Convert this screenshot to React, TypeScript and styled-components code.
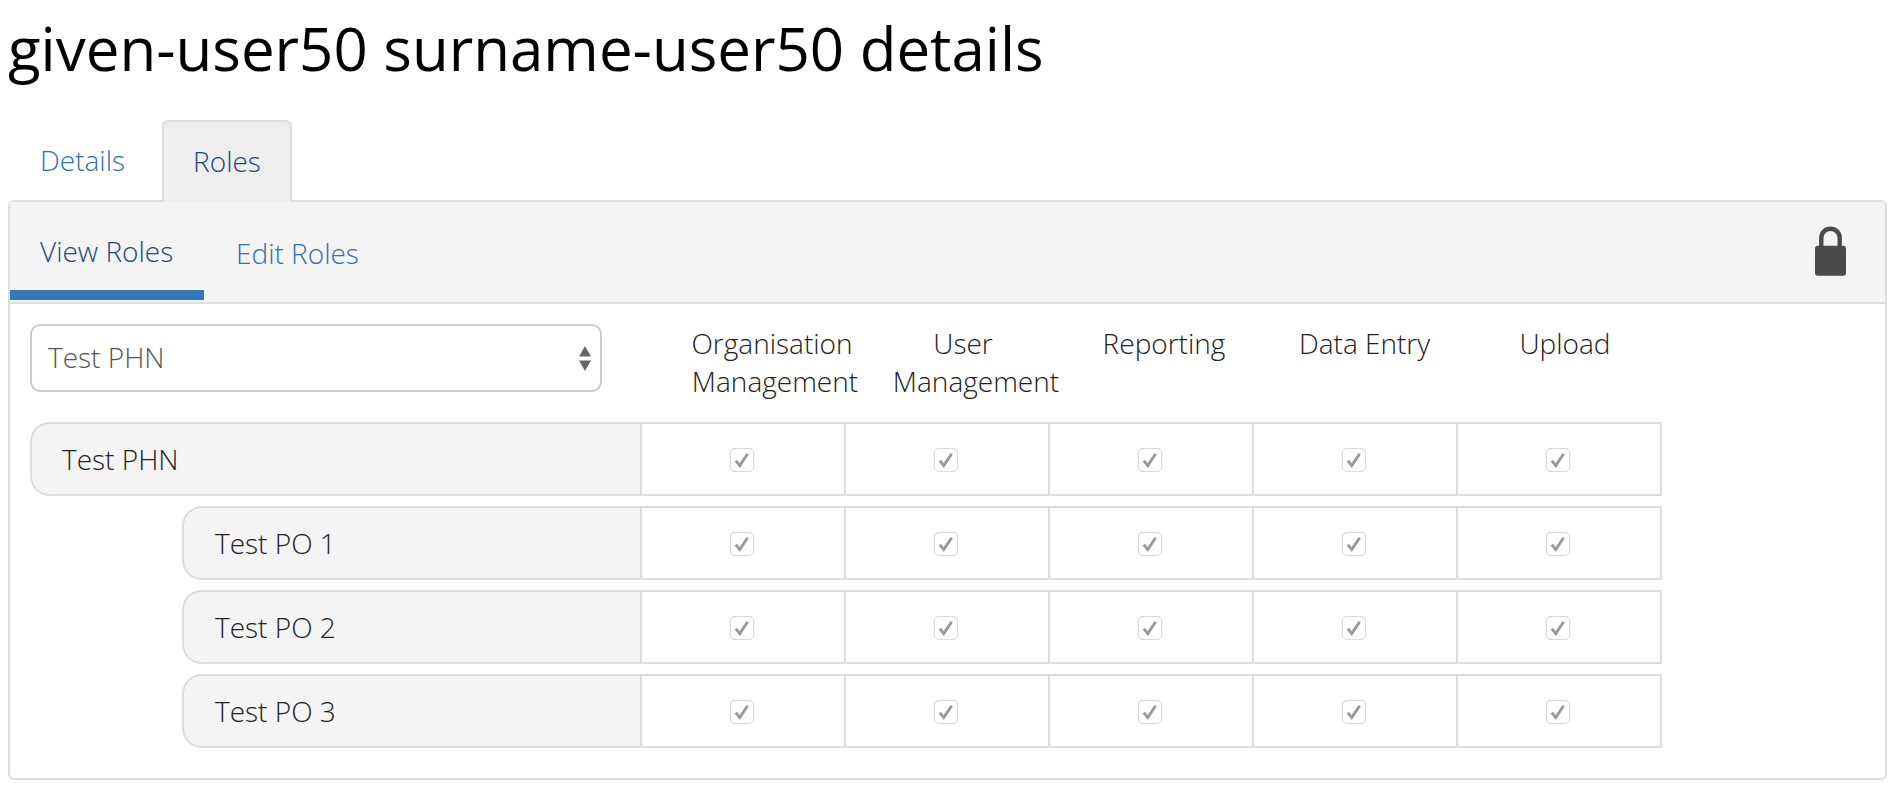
import React from "react";
import styled, { createGlobalStyle } from "styled-components";

const GlobalStyle = createGlobalStyle`
  html, body {
    margin: 0;
    padding: 0;
    background: #fff;
    color: #333;
    font-family: "Open Sans", "Liberation Sans", sans-serif;
  }
`;

const Page = styled.div`
  padding: 0 11px 0 8px;
`;

const Title = styled.h1`
  margin: 0;
  height: 120px;
  padding-top: 6px;
  box-sizing: border-box;
  font-size: 60px;
  line-height: 84px;
  font-weight: 400;
  color: #000;
`;

const Tabs = styled.div`
  display: flex;
  height: 80px;
`;

const Tab = styled.div<{ $active?: boolean }>`
  display: flex;
  align-items: center;
  justify-content: ${(p) => (p.$active ? "center" : "flex-start")};
  box-sizing: border-box;
  height: 82px;
  width: ${(p) => (p.$active ? "130px" : "154px")};
  padding: ${(p) => (p.$active ? "0" : "0 0 0 32px")};
  padding-bottom: 2px;
  font-size: 28px;
  font-weight: 300;
  color: ${(p) => (p.$active ? "#1f4a75" : "#2f72ad")};
  background: ${(p) => (p.$active ? "#eee" : "transparent")};
  border: ${(p) => (p.$active ? "2px solid #ddd" : "none")};
  border-bottom: none;
  border-radius: 6px 6px 0 0;
`;

const Panel = styled.div`
  border: 2px solid #ddd;
  border-radius: 6px;
  height: 580px;
  box-sizing: border-box;
`;

const SubNav = styled.div`
  display: flex;
  align-items: flex-start;
  height: 102px;
  box-sizing: border-box;
  background: #f4f4f4;
  border-bottom: 2px solid #ddd;
  padding-right: 39px;
`;

const SubTab = styled.div<{ $active?: boolean }>`
  box-sizing: border-box;
  height: 98px;
  width: ${(p) => (p.$active ? "194px" : "auto")};
  padding: ${(p) => (p.$active ? "29px 0 0 30px" : "31px 0 0 32px")};
  font-size: 28px;
  line-height: 40px;
  font-weight: 300;
  color: ${(p) => (p.$active ? "#1f4a75" : "#2f72ad")};
  border-bottom: 10px solid ${(p) => (p.$active ? "#337ab7" : "transparent")};
`;

const LockIcon = styled.svg`
  display: block;
  margin: 23px 0 0 auto;
  width: 31px;
  height: 51px;
`;

const Content = styled.div`
  padding: 20px 0 0 20px;
`;

const HeaderRow = styled.div`
  display: grid;
  grid-template-columns: 640px 210px 192px 184px 217px 184px;
  height: 98px;
`;

const SelectBox = styled.div`
  display: flex;
  align-items: center;
  justify-content: space-between;
  box-sizing: border-box;
  width: 572px;
  height: 68px;
  padding: 0 9px 2px 16px;
  background: #fff;
  border: 2px solid #ccc;
  border-radius: 10px;
  font-size: 28px;
  font-weight: 300;
  color: #555;
`;

const SelectArrows = styled.svg`
  width: 12px;
  height: 25px;
  margin-top: 2px;
`;

const ColumnLabel = styled.div`
  font-size: 28px;
  line-height: 38px;
  font-weight: 300;
  text-align: center;
  color: #222;
`;

const LabelLine = styled.div<{ $pull?: number }>`
  padding-right: ${(p) => p.$pull ?? 0}px;
`;

const RoleRow = styled.div<{ $indent: number }>`
  display: flex;
  width: 1632px;
  height: 74px;
  margin-bottom: 10px;
  padding-left: ${(p) => p.$indent}px;
  box-sizing: border-box;
`;

const RowName = styled.div<{ $nested: boolean }>`
  flex: 1;
  display: flex;
  align-items: center;
  box-sizing: border-box;
  padding-left: ${(p) => (p.$nested ? "31px" : "30px")};
  background: #f4f4f4;
  border: 2px solid #ddd;
  border-radius: 20px 0 0 20px;
  font-size: 28px;
  font-weight: 300;
  color: #222;
`;

const RoleCell = styled.div`
  display: flex;
  align-items: center;
  justify-content: center;
  box-sizing: border-box;
  width: 204px;
  padding: 2px 2px 0 0;
  border: 2px solid #ddd;
  border-left: none;
  background: #fff;
`;

const CheckBox = styled.span`
  display: flex;
  align-items: center;
  justify-content: center;
  box-sizing: border-box;
  width: 24px;
  height: 24px;
  border: 1px solid #d9d9d9;
  border-radius: 5px;
  background: #fff;
  box-shadow: 0 0 1px #e4e4e4;
`;

const CheckMark = styled.svg`
  width: 18px;
  height: 18px;
`;

const columns = [
  { lines: ["Organisation", "Management"], pull: 6 },
  { lines: ["User", "Management"], pull: 26 },
  { lines: ["Reporting"], pull: 0 },
  { lines: ["Data Entry"], pull: 0 },
  { lines: ["Upload"], pull: 0 },
];

const rows = [
  { name: "Test PHN", indent: 0 },
  { name: "Test PO 1", indent: 152 },
  { name: "Test PO 2", indent: 152 },
  { name: "Test PO 3", indent: 152 },
];

function App() {
  return (
    <Page>
      <GlobalStyle />
      <Title>given-user50 surname-user50 details</Title>
      <Tabs>
        <Tab>Details</Tab>
        <Tab $active>Roles</Tab>
      </Tabs>
      <Panel>
        <SubNav>
          <SubTab $active>View Roles</SubTab>
          <SubTab>Edit Roles</SubTab>
          <LockIcon viewBox="0 0 32 52">
            <path
              d="M6.5 24V13a9.5 9.5 0 0 1 19 0v11"
              fill="none"
              stroke="#4a4a4a"
              strokeWidth="4.5"
            />
            <rect x="0" y="21" width="32" height="31" rx="3" fill="#4a4a4a" />
          </LockIcon>
        </SubNav>
        <Content>
          <HeaderRow>
            <SelectBox>
              Test PHN
              <SelectArrows viewBox="0 0 12 25">
                <path d="M6 0l6 10.5H0z" fill="#666" />
                <path d="M6 25L0 14.5h12z" fill="#666" />
              </SelectArrows>
            </SelectBox>
            {columns.map((col) => (
              <ColumnLabel key={col.lines.join(" ")}>
                {col.lines.map((line, i) => (
                  <LabelLine
                    key={line}
                    $pull={i === 0 ? col.pull : 0}
                  >
                    {line}
                  </LabelLine>
                ))}
              </ColumnLabel>
            ))}
          </HeaderRow>
          {rows.map((row) => (
            <RoleRow key={row.name} $indent={row.indent}>
              <RowName $nested={row.indent > 0}>{row.name}</RowName>
              {columns.map((col) => (
                <RoleCell key={col.lines.join(" ")}>
                  <CheckBox>
                    <CheckMark viewBox="0 0 16 16">
                      <path
                        d="M2.5 8.5L6 13L13 2.5"
                        fill="none"
                        stroke="#999"
                        strokeWidth="2.6"
                      />
                    </CheckMark>
                  </CheckBox>
                </RoleCell>
              ))}
            </RoleRow>
          ))}
        </Content>
      </Panel>
    </Page>
  );
}

export default App;
